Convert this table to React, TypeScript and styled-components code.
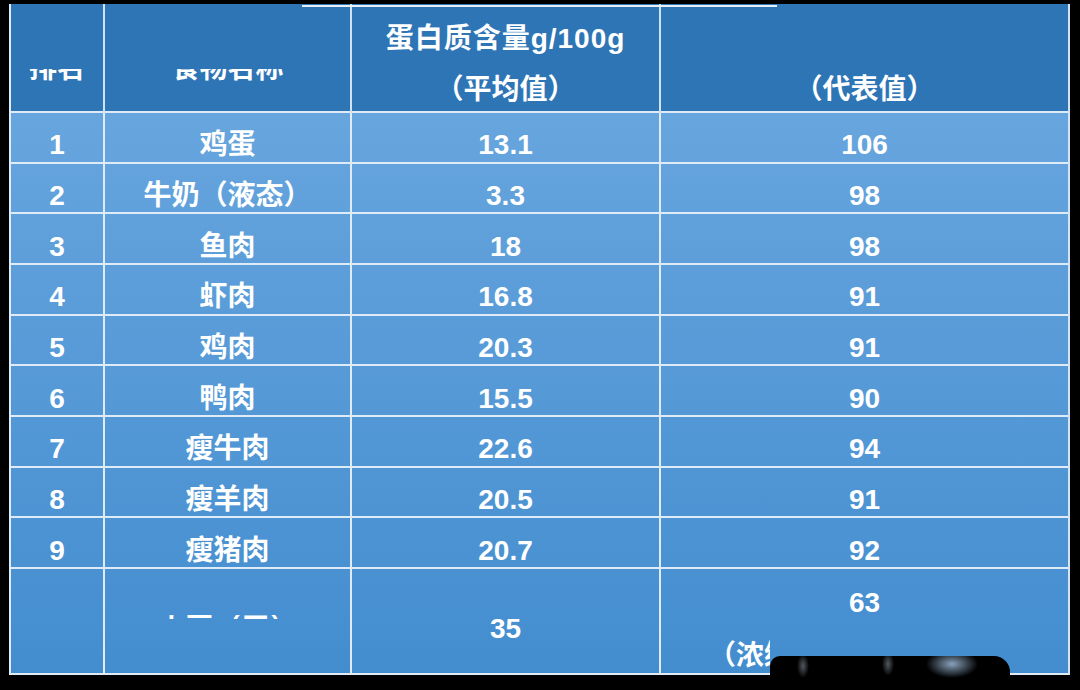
import styled, { createGlobalStyle } from "styled-components";

// protein content table, screenshot style

const GlobalStyle = createGlobalStyle`
  html, body {
    margin: 0;
    padding: 0;
    background: #000;
  }
  body {
    font-family: "Liberation Sans", "Noto Sans CJK SC", sans-serif;
  }
`;

const COLS = "94px 247px 309px 407px";
const LINE = "#dfebf7";

const Page = styled.div`
  position: relative;
  width: 1080px;
  height: 690px;
  overflow: hidden;
  box-sizing: border-box;
  padding: 4px 0 0 9px;
  background: #000;
`;

const Frame = styled.div`
  width: 1061px;
  box-sizing: border-box;
  border-left: 2px solid ${LINE};
  border-right: 2px solid #d3e3f4;
  border-bottom: 2px solid ${LINE};
  color: #fff;
  font-weight: bold;
  font-size: 28px;
`;

const HeaderRow = styled.div`
  display: grid;
  grid-template-columns: ${COLS};
  height: 109px;
  box-sizing: border-box;
  background: #2e75b6;
  border-bottom: 2px solid ${LINE};
`;

const HeadCell = styled.div<{ $last?: boolean }>`
  display: flex;
  flex-direction: column;
  align-items: center;
  justify-content: center;
  padding-top: 9px;
  line-height: 51px;
  white-space: nowrap;
  border-right: ${(p) => (p.$last ? "none" : `2px solid #cfe2f6`)};
`;

const WideLine = styled.span`
  letter-spacing: 1px;
`;

// only the lower half of these labels is visible in the source
const HalfLabel = styled.span`
  display: inline-block;
  margin-top: 9px;
  line-height: 28px;
  clip-path: inset(52% 0 0 0);
`;

const Body = styled.div`
  display: grid;
  grid-template-columns: ${COLS};
  grid-template-rows: repeat(9, 50.67px) 104px;
  background: linear-gradient(#67a5de, #438dcf);
`;

const Cell = styled.div<{ $last?: boolean; $end?: boolean }>`
  display: flex;
  flex-direction: column;
  align-items: center;
  justify-content: center;
  box-sizing: border-box;
  padding-top: 16px;
  line-height: 28px;
  white-space: nowrap;
  border-right: ${(p) => (p.$last ? "none" : `2px solid ${LINE}`)};
  border-bottom: ${(p) => (p.$end ? "none" : `2px solid ${LINE}`)};
`;

const Stack = styled.div`
  display: flex;
  flex-direction: column;
  align-self: stretch;
  align-items: center;
  line-height: 53px;
`;

const NoteLine = styled.span`
  align-self: flex-start;
  margin-left: 47px;
  width: 84px;
  clip-path: inset(0 22px 0 0);
`;

// top slice of the blurred-out label
const SliceLabel = styled.span`
  display: inline-block;
  line-height: 28px;
  clip-path: inset(0 0 85% 0);
`;

const TopRule = styled.div`
  position: absolute;
  left: 302px;
  top: 5px;
  width: 475px;
  height: 2px;
  background: #e8f0f8;
`;

const Blot = styled.div`
  position: absolute;
  left: 770px;
  top: 656px;
  width: 240px;
  height: 40px;
  border-radius: 10px 16px 0 0;
  background:
    radial-gradient(ellipse 6px 12px at 33px 10px, rgba(150, 160, 175, 0.55), transparent),
    radial-gradient(ellipse 6px 12px at 118px 8px, rgba(150, 160, 175, 0.55), transparent),
    radial-gradient(ellipse 26px 14px at 182px 8px, rgba(160, 190, 220, 0.85), transparent),
    #000;
`;

const rows = [
  ["1", "鸡蛋", "13.1", "106"],
  ["2", "牛奶（液态）", "3.3", "98"],
  ["3", "鱼肉", "18", "98"],
  ["4", "虾肉", "16.8", "91"],
  ["5", "鸡肉", "20.3", "91"],
  ["6", "鸭肉", "15.5", "90"],
  ["7", "瘦牛肉", "22.6", "94"],
  ["8", "瘦羊肉", "20.5", "91"],
  ["9", "瘦猪肉", "20.7", "92"],
];

export default function App() {
  return (
    <>
      <GlobalStyle />
      <Page>
        <Frame>
          <HeaderRow>
            <HeadCell>
              <HalfLabel>排名</HalfLabel>
            </HeadCell>
            <HeadCell>
              <HalfLabel>食物名称</HalfLabel>
            </HeadCell>
            <HeadCell>
              <WideLine>蛋白质含量g/100g</WideLine>
              <span>（平均值）</span>
            </HeadCell>
            <HeadCell $last>
              <span>&nbsp;</span>
              <span>（代表值）</span>
            </HeadCell>
          </HeaderRow>
          <Body>
            {rows.map((r) => (
              <>
                <Cell key={r[0] + "a"}>{r[0]}</Cell>
                <Cell key={r[0] + "b"}>{r[1]}</Cell>
                <Cell key={r[0] + "c"}>{r[2]}</Cell>
                <Cell key={r[0] + "d"} $last>
                  {r[3]}
                </Cell>
              </>
            ))}
            <Cell $end />
            <Cell $end>
              <SliceLabel>大豆（干）</SliceLabel>
            </Cell>
            <Cell $end>35</Cell>
            <Cell $end $last>
              <Stack>
                <span>63</span>
                <NoteLine>（浓缩</NoteLine>
              </Stack>
            </Cell>
          </Body>
        </Frame>
        <TopRule />
        <Blot />
      </Page>
    </>
  );
}
